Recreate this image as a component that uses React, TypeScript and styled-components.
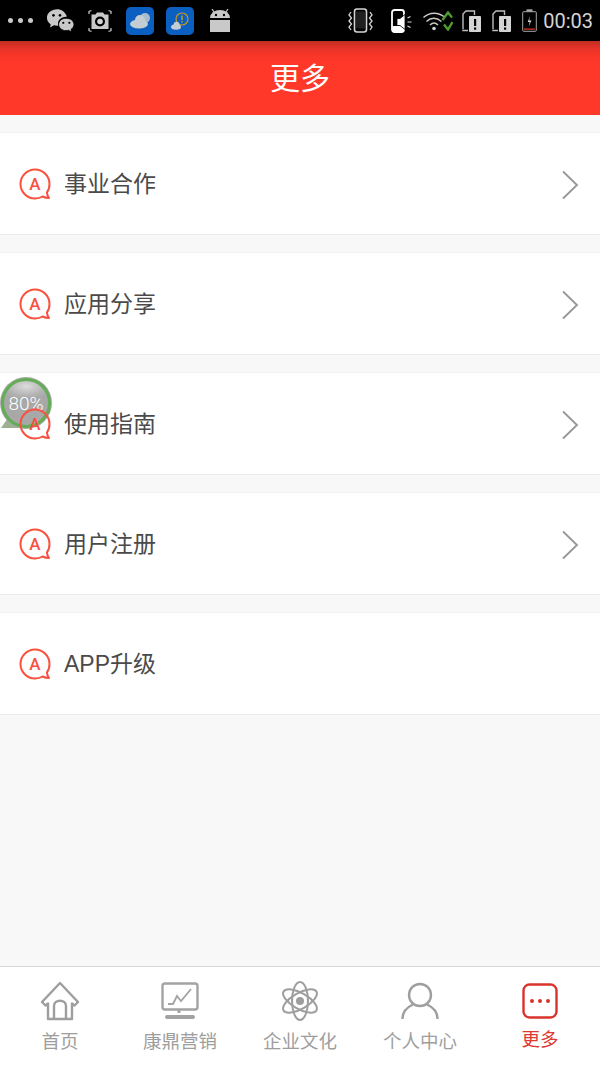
import React from "react";
import styled, { createGlobalStyle } from "styled-components";

const GlobalStyle = createGlobalStyle`
  html, body {
    margin: 0;
    padding: 0;
    background: #f8f8f8;
    font-family: "Liberation Sans", "Noto Sans CJK SC", sans-serif;
  }
`;

const menuItems = [
  { label: "事业合作", arrow: true },
  { label: "应用分享", arrow: true },
  { label: "使用指南", arrow: true },
  { label: "用户注册", arrow: true },
  { label: "APP升级", arrow: false },
];

const WeChatIcon = () => (
  <svg width="28" height="25" viewBox="0 0 30 26">
    <path d="M12 1C5.800 1 1 5 1 10c0 2.900 1.600 5.300 4 7l-.6 3.400L8.500 18c1.100.3 2.200.5 3.500.5.800 0 1.100-.1 1-.5-1-5 3-9 8.500-9 .6 0 .9-.3.700-.8C20.300 3.700 16.500 1 12 1z" fill="#c9c9c9" />
    <path d="M21.500 10.500c-4.400 0-8 3-8 6.700s3.600 6.700 8 6.700c.9 0 1.800-.1 2.600-.4l3.400 2-.6-3c1.900-1.300 3.100-3.200 3.100-5.300 0-3.700-3.600-6.700-8.500-6.700z" fill="#c9c9c9" stroke="#000" strokeWidth="1" />
    <circle cx="8" cy="7.500" r="1.400" fill="#000" />
    <circle cx="15" cy="7.500" r="1.400" fill="#000" />
    <circle cx="18.500" cy="15.500" r="1.200" fill="#000" />
    <circle cx="25" cy="15.500" r="1.200" fill="#000" />
  </svg>
);

const CameraIcon = () => (
  <svg width="24" height="24" viewBox="0 0 24 24" fill="none">
    <path d="M1 5V2.500L3.500 1.500M20.500 1.500l2.500 1V5M1 19v2.500l2.500 1M23 19v2.500l-2.500 1" stroke="#bdbdbd" strokeWidth="1.300" />
    <path d="M3.500 5.500h4l1.500-2h6l1.500 2h4V20h-17z" fill="#c9c9c9" />
    <circle cx="12" cy="12.500" r="5" fill="#000" />
    <circle cx="12" cy="12.500" r="2.800" fill="#d4d4d4" />
  </svg>
);

const WeatherTile = ({ alert }: { alert?: boolean }) => (
  <svg width="28" height="28" viewBox="0 0 28 28">
    <rect width="28" height="28" rx="5" fill="#0b5fc0" />
    {alert ? (
      <>
        <circle cx="16" cy="12" r="6" fill="none" stroke="#c79a1c" strokeWidth="1.200" />
        <rect x="15.300" y="8.500" width="1.500" height="4.500" fill="#c79a1c" />
        <rect x="15.300" y="14" width="1.500" height="1.500" fill="#c79a1c" />
        <ellipse cx="10" cy="20" rx="5" ry="2.800" fill="#c4cdd4" />
        <circle cx="10.500" cy="17.500" r="2.800" fill="#c4cdd4" />
      </>
    ) : (
      <>
        <circle cx="19" cy="11" r="5" fill="#a9bccb" />
        <ellipse cx="13" cy="17" rx="9" ry="4.500" fill="#c4cdd4" />
        <circle cx="14" cy="13" r="5" fill="#c4cdd4" />
      </>
    )}
  </svg>
);

const AndroidIcon = () => (
  <svg width="20" height="24" viewBox="0 0 20 24">
    <path d="M0 9a10 8 0 0 1 20 0z" fill="#c9c9c9" />
    <path d="M4 3 2 0M16 3l2-3" stroke="#c9c9c9" strokeWidth="1.200" />
    <circle cx="6" cy="6" r="1.200" fill="#000" />
    <circle cx="14" cy="6" r="1.200" fill="#000" />
    <rect x="0" y="11" width="20" height="12" fill="#c9c9c9" />
  </svg>
);

const VibrateIcon = () => (
  <svg width="25" height="25" viewBox="0 0 25 25" fill="none" stroke="#d4d4d4">
    <rect x="6.500" y="1" width="12" height="23" rx="2.500" strokeWidth="1.600" />
    <rect x="8" y="3.500" width="9" height="17" fill="#d4d4d4" stroke="none" opacity="0.150" />
    <path d="M3 4 1 7l2.500 3L1 13l2.500 3L1 19l2 3M22 4l2 3-2.500 3 2.500 3-2.500 3 2.500 3-2 3" strokeWidth="1.300" />
  </svg>
);

const PhoneSpeakerIcon = () => (
  <svg width="21" height="24" viewBox="0 0 21 24">
    <rect x="1" y="1" width="12" height="22" rx="2.500" fill="none" stroke="#fff" strokeWidth="1.800" />
    <rect x="1" y="17" width="12" height="6" rx="1.500" fill="#fff" />
    <path d="M6 9.500h3l5-4v15l-5-4H6z" fill="#fff" stroke="#000" strokeWidth="0.800" />
    <path d="M16.500 9l3-1.500M16.500 13h4M16.500 17l3 1.500" stroke="#ddd" strokeWidth="1.200" />
  </svg>
);

const WifiIcon = () => (
  <svg width="30" height="20" viewBox="0 0 30 20" fill="none">
    <path d="M0.500 6.500C7 1 15 1 21.500 6" stroke="#c9c9c9" strokeWidth="1.500" />
    <path d="M3.500 10.500c4.500-4 10-4 15 0" stroke="#c9c9c9" strokeWidth="1.500" />
    <path d="M7 14c2.500-2.400 5.500-2.400 8 0" stroke="#c9c9c9" strokeWidth="1.500" />
    <circle cx="11" cy="17.500" r="1.800" fill="#d4d4d4" />
    <path d="M19.500 9 25 1.500l4 5M29.500 11 25 18.500l-4-5" stroke="#4f9c2e" strokeWidth="2.400" />
  </svg>
);

const SimAlertIcon = () => (
  <svg width="19" height="22" viewBox="0 0 19 22">
    <path d="M1 19V4l3-3h8.500v4" fill="none" stroke="#bdbdbd" strokeWidth="1.400" />
    <path d="M1 19.500v1h5" fill="none" stroke="#bdbdbd" strokeWidth="1.400" />
    <rect x="7" y="6" width="12" height="16" rx="1" fill="#d4d4d4" />
    <rect x="12" y="9" width="2.200" height="7" fill="#000" />
    <rect x="12" y="17.500" width="2.200" height="2.200" fill="#000" />
  </svg>
);

const BatteryIcon = () => (
  <svg width="15" height="23" viewBox="0 0 15 23" fill="none">
    <rect x="0.700" y="2.700" width="13.600" height="19.600" rx="1" stroke="#a8a8a8" strokeWidth="1" />
    <rect x="4.500" y="0.300" width="6" height="2.400" fill="#a8a8a8" />
    <path d="M8 7 5.700 13h2l-1 4.500 2.800-6H7.200z" fill="#d4d4d4" />
    <rect x="2" y="19.500" width="11" height="1.200" fill="#e53a2f" />
  </svg>
);

const BubbleIcon = () => (
  <BubbleSvg viewBox="0 0 32 32" width="32" height="32">
    <path
      d="M16 1.500C8 1.500 1.500 8 1.500 16S8 30.500 16 30.500c3 0 5.500-.8 7.500-2 1.800.9 4.400 1.500 6.500 1.500-1-1.400-1.900-3.200-2.100-5.500 1.900-2.400 2.600-5.300 2.600-8.500C30.500 8 24 1.500 16 1.500z"
      fill="none"
      stroke="#f9503f"
      strokeWidth="2"
      strokeLinejoin="round"
    />
    <BubbleLetter x="16" y="22" textAnchor="middle">
      A
    </BubbleLetter>
  </BubbleSvg>
);

const ChevronIcon = () => (
  <ChevronSvg width="18" height="30" viewBox="0 0 18 30" fill="none">
    <path d="M2 1.500 16 15 2 28.500" stroke="#969696" strokeWidth="1.800" />
  </ChevronSvg>
);

const HomeIcon = () => (
  <svg width="40" height="40" viewBox="0 0 40 40" fill="none" stroke="#9e9e9e" strokeWidth="2.400" strokeLinejoin="round">
    <path d="M20 2 2 21l3.500 3.500 2.500-2V38h24V22.500l2.500 2L38 21z" />
    <path d="M14 38V25c0-7 12-7 12 0v13" />
  </svg>
);

const ChartIcon = () => (
  <svg width="38" height="38" viewBox="0 0 38 38" fill="none" stroke="#a3a3a3">
    <rect x="1.500" y="1.500" width="35" height="26" rx="2.500" strokeWidth="2.400" />
    <path d="M7 22h5l4-8 4 5L30 7" strokeWidth="1.800" />
    <path d="M18 28v3" strokeWidth="3" />
    <rect x="4" y="33" width="30" height="4" rx="2" fill="#a3a3a3" stroke="none" />
  </svg>
);

const AtomIcon = () => (
  <svg width="40" height="40" viewBox="0 0 40 40" fill="none" stroke="#9e9e9e" strokeWidth="2">
    <ellipse cx="20" cy="20" rx="19" ry="8" transform="rotate(30 20 20)" />
    <ellipse cx="20" cy="20" rx="19" ry="8" transform="rotate(-30 20 20)" />
    <ellipse cx="20" cy="20" rx="19" ry="8" transform="rotate(90 20 20)" />
    <circle cx="20" cy="20" r="4" fill="#9e9e9e" stroke="none" />
  </svg>
);

const PersonIcon = () => (
  <svg width="38" height="38" viewBox="0 0 38 38" fill="none" stroke="#9e9e9e" strokeWidth="2.400">
    <circle cx="19" cy="13" r="11" />
    <path d="M1.500 37c0-7 5-12 10.500-14.500M36.500 37c0-7-5-12-10.500-14.500" />
  </svg>
);

const MoreIcon = () => (
  <svg width="36" height="36" viewBox="0 0 36 36" fill="none">
    <rect x="1.500" y="1.500" width="33" height="33" rx="6" stroke="#d9332c" strokeWidth="2.400" />
    <circle cx="10" cy="18" r="2" fill="#d9332c" />
    <circle cx="18" cy="18" r="2" fill="#d9332c" />
    <circle cx="26" cy="18" r="2" fill="#d9332c" />
  </svg>
);

const tabs = [
  { label: "首页", icon: <HomeIcon /> },
  { label: "康鼎营销", icon: <ChartIcon /> },
  { label: "企业文化", icon: <AtomIcon /> },
  { label: "个人中心", icon: <PersonIcon /> },
  { label: "更多", icon: <MoreIcon />, active: true },
];

const App: React.FC = () => {
  return (
    <Page>
      <GlobalStyle />
      <StatusBar>
        <StatusGroup>
          <Dots>
            <i />
            <i />
            <i />
          </Dots>
          <WeChatIcon />
          <CameraIcon />
          <WeatherTile />
          <WeatherTile alert />
          <AndroidIcon />
        </StatusGroup>
        <StatusGroupRight>
          <VibrateIcon />
          <PhoneSpeakerIcon />
          <WifiIcon />
          <SimAlertIcon />
          <SimAlertIcon />
          <BatteryIcon />
          <Clock>00:03</Clock>
        </StatusGroupRight>
      </StatusBar>
      <Header>更多</Header>
      <Content>
        {menuItems.map((item) => (
          <MenuRow key={item.label}>
            <BubbleIcon />
            <MenuLabel>{item.label}</MenuLabel>
            {item.arrow && <ChevronIcon />}
          </MenuRow>
        ))}
        {/* 떠 있는 메모리 표시 위젯 */}
        <FloatBadge>
          <FloatTail />
          <FloatCircle>80%</FloatCircle>
        </FloatBadge>
      </Content>
      <TabBar>
        {tabs.map((tab) => (
          <TabItem key={tab.label} $active={tab.active}>
            <TabIcon>{tab.icon}</TabIcon>
            <TabLabel $active={tab.active}>{tab.label}</TabLabel>
          </TabItem>
        ))}
      </TabBar>
    </Page>
  );
};

const Page = styled.div`
  display: flex;
  flex-direction: column;
  width: 600px;
  height: 1067px;
  overflow: hidden;
  background: #f8f8f8;
`;

const StatusBar = styled.div`
  display: flex;
  align-items: center;
  justify-content: space-between;
  height: 41px;
  padding: 0 7px 0 8px;
  background: #000;
  flex-shrink: 0;
`;

const StatusGroup = styled.div`
  display: flex;
  align-items: center;
  gap: 12px;
  & > svg:first-of-type {
    margin-left: 1px;
  }
  & > svg:nth-of-type(2) {
    margin: 0 2px;
  }
  & > svg:last-child {
    margin-left: 4px;
  }
`;

const StatusGroupRight = styled.div`
  display: flex;
  align-items: center;
  gap: 11px;
  & > svg:nth-child(2) {
    margin-left: 7px;
  }
  & > svg:nth-child(4) {
    margin-left: -2px;
  }
`;

const Dots = styled.div`
  display: flex;
  gap: 5px;
  i {
    display: block;
    width: 5px;
    height: 5px;
    border-radius: 50%;
    background: #c9c9c9;
  }
`;

const Clock = styled.span`
  margin-left: -5px;
  font-family: "Roboto", "Liberation Sans", sans-serif;
  font-size: 20px;
  color: #d4d4d4;
`;

const Header = styled.div`
  display: flex;
  align-items: center;
  justify-content: center;
  height: 74px;
  padding-bottom: 4px;
  box-sizing: border-box;
  flex-shrink: 0;
  font-size: 30px;
  color: #fff;
  background: linear-gradient(#bf2c20 0, #e6332a 7px, #f83628 14px, #ff3829 22px, #ff3829 100%);
`;

const Content = styled.div`
  position: relative;
  flex: 1;
  display: flex;
  flex-direction: column;
  gap: 17px;
  padding-top: 17px;
`;

const MenuRow = styled.div`
  display: flex;
  align-items: center;
  height: 101px;
  padding: 0 21px 0 19px;
  background: #fff;
  border-top: 1px solid #f0f0f0;
  border-bottom: 1px solid #ececec;
`;

const BubbleSvg = styled.svg`
  position: relative;
  z-index: 2;
  flex-shrink: 0;
`;

const BubbleLetter = styled.text`
  font-family: "Roboto", "Liberation Sans", sans-serif;
  font-size: 17px;
  font-weight: 500;
  fill: #f9503f;
`;

const ChevronSvg = styled.svg`
  margin-top: 2px;
`;

const MenuLabel = styled.span`
  flex: 1;
  margin-left: 13px;
  padding-bottom: 4px;
  font-size: 23px;
  color: #4a4a4a;
`;

const FloatBadge = styled.div`
  position: absolute;
  z-index: 1;
  left: 1px;
  top: 263px;
  width: 50px;
  height: 50px;
`;

const FloatTail = styled.div`
  position: absolute;
  left: 0;
  bottom: 0;
  width: 24px;
  height: 14px;
  background: #9cb092;
  clip-path: polygon(40% 0, 100% 100%, 0 100%);
`;

const FloatCircle = styled.div`
  position: absolute;
  inset: 0;
  box-sizing: border-box;
  display: flex;
  align-items: center;
  justify-content: center;
  border-radius: 50%;
  border: 3px solid #62ad55;
  background: radial-gradient(ellipse 60% 30% at 50% 12%, #dcdcdc 0, #b3b3b3 70%, #a8a8a8 100%), #a8a8a8;
  box-shadow: 0 0 0 1px #a8a8a8;
  font-family: "Roboto", sans-serif;
  font-size: 19px;
  font-weight: 300;
  color: #fff;
`;

const TabBar = styled.div`
  display: grid;
  grid-template-columns: repeat(5, 1fr);
  height: 101px;
  flex-shrink: 0;
  background: #fff;
  border-top: 1px solid #d8d8d8;
  box-sizing: border-box;
`;

const TabItem = styled.div<{ $active?: boolean }>`
  display: flex;
  flex-direction: column;
  align-items: center;
  padding-top: 14px;
  font-size: 18.5px;
  color: ${(p) => (p.$active ? "#dc3a33" : "#9e9e9e")};
`;

const TabIcon = styled.div`
  display: flex;
  align-items: center;
  justify-content: center;
  height: 40px;
  margin-bottom: 6px;
`;

const TabLabel = styled.span<{ $active?: boolean }>`
  margin-top: ${(p) => (p.$active ? "-2px" : "0")};
`;

export default App;
